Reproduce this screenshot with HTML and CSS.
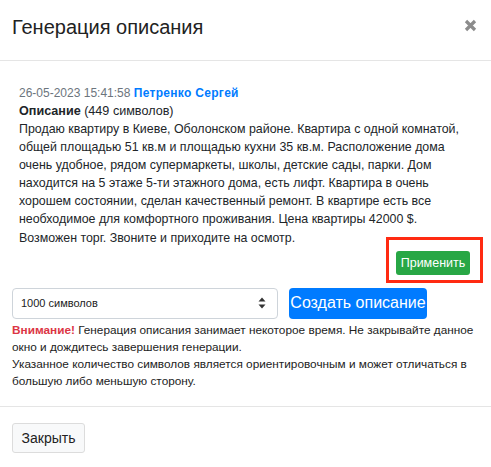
FILE: index.html
```html
<!DOCTYPE html>
<html lang="ru">
<head>
<meta charset="utf-8">
<title>Генерация описания</title>
<link rel="stylesheet" href="styles.css">
</head>
<body>
<div class="modal">
  <div class="modal-header">
    <h5 class="modal-title">Генерация описания</h5>
    <button class="close" type="button" aria-label="Закрыть">
      <svg width="13" height="13" viewBox="0 0 13 13"><path d="M2 2 L11 11 M11 2 L2 11" stroke="#8c8c8c" stroke-width="3.2" stroke-linecap="butt"/></svg>
    </button>
  </div>
  <div class="modal-body">
    <div class="history-item">
      <div class="meta"><span class="date">26-05-2023 15:41:58</span> <span class="author">Петренко Сергей</span></div>
      <div class="desc-title"><b>Описание</b> (449 символов)</div>
      <p class="desc-text">Продаю квартиру в Киеве, Оболонском районе. Квартира с одной комнатой, общей площадью 51 кв.м и площадью кухни 35 кв.м. Расположение дома очень удобное, рядом супермаркеты, школы, детские сады, парки. Дом находится на 5 этаже 5-ти этажного дома, есть лифт. Квартира в очень хорошем состоянии, сделан качественный ремонт. В квартире есть все необходимое для комфортного проживания. Цена квартиры 42000 $. Возможен торг. Звоните и приходите на осмотр.</p>
      <div class="apply-row">
        <span class="apply-wrap">
          <button class="btn-apply" type="button">Применить</button>
          <span class="highlight"></span>
        </span>
      </div>
    </div>
    <div class="gen-row">
      <div class="select">
        <span>1000 символов</span>
        <svg width="8" height="12" viewBox="0 0 8 12"><path d="M4 0.5 L7.5 4.5 H0.5 Z M4 11.5 L7.5 7.5 H0.5 Z" fill="#333"/></svg>
      </div>
      <button class="btn-create" type="button">Создать описание</button>
    </div>
    <p class="note"><b class="warn">Внимание!</b> Генерация описания занимает некоторое время. Не закрывайте данное окно и дождитесь завершения генерации.<br>Указанное количество символов является ориентировочным и может отличаться в большую либо меньшую сторону.</p>
  </div>
  <div class="modal-footer">
    <button class="btn-close" type="button">Закрыть</button>
  </div>
</div>
</body>
</html>
```
FILE: styles.css
```css
* { box-sizing: border-box; }
html, body { margin: 0; padding: 0; background: #fff; }
body {
  font-family: "Liberation Sans", Arial, Helvetica, sans-serif;
  color: #212529;
  width: 491px;
  height: 467px;
  overflow: hidden;
}
.modal { display: flex; flex-direction: column; }
.modal-header {
  height: 61px;
  padding: 12px 14px 0 12px;
  border-bottom: 1px solid #e5e5e5;
  display: flex;
  justify-content: space-between;
  align-items: flex-start;
}
.modal-title {
  margin: 0;
  font-size: 20px;
  font-weight: 400;
  line-height: 30px;
  color: #222;
}
.close {
  border: 0;
  background: none;
  padding: 0;
  margin-top: 7px;
  width: 13px;
  height: 13px;
  display: flex;
}
.modal-body { padding: 23px 12px 0 12px; }
.history-item { padding: 0 9px 0 7px; }
.meta { font-size: 12px; line-height: 18px; }
.date { color: #6c757d; }
.author { color: #007bff; font-weight: 700; letter-spacing: 0.3px; }
.desc-title { font-size: 12.6px; line-height: 18px; }
.desc-text { margin: 0; font-size: 12.4px; line-height: 18.1px; }
.apply-row { display: flex; justify-content: flex-end; margin-top: 4px; }
.apply-wrap { position: relative; display: inline-flex; }
.btn-apply {
  font-family: inherit;
  background: #28a745;
  color: #fff;
  border: 0;
  border-radius: 3px;
  height: 24px;
  width: 74px;
  padding: 0;
  font-size: 12.5px;
  font-weight: 500;
}
.highlight {
  position: absolute;
  left: -10px;
  right: -13px;
  top: -14px;
  bottom: -8px;
  border: 3.5px solid #ff2a12;
  pointer-events: none;
}
.gen-row { display: flex; gap: 11px; margin-top: 13px; }
.select {
  width: 266px;
  height: 31px;
  border: 1px solid #ced4da;
  border-radius: 4px;
  padding: 0 11px 0 8px;
  display: flex;
  align-items: center;
  justify-content: space-between;
  font-size: 11px;
  color: #222;
}
.btn-create {
  font-family: inherit;
  background: #007bff;
  color: #fff;
  border: 0;
  border-radius: 4px;
  height: 31px;
  width: 138px;
  padding: 0;
  font-size: 16px;
}
.note {
  margin: 3px 0 0 0;
  font-size: 11.8px;
  line-height: 17px;
  color: #222;
}
.warn { color: #dc3545; }
.modal-footer {
  margin-top: 16px;
  border-top: 1px solid #e5e5e5;
  padding: 16px 12px;
}
.btn-close {
  font-family: inherit;
  background: #f8f9fa;
  border: 1px solid #dcdcdc;
  border-radius: 3px;
  height: 30px;
  width: 73px;
  padding: 0;
  font-size: 14px;
  color: #222;
}
```
